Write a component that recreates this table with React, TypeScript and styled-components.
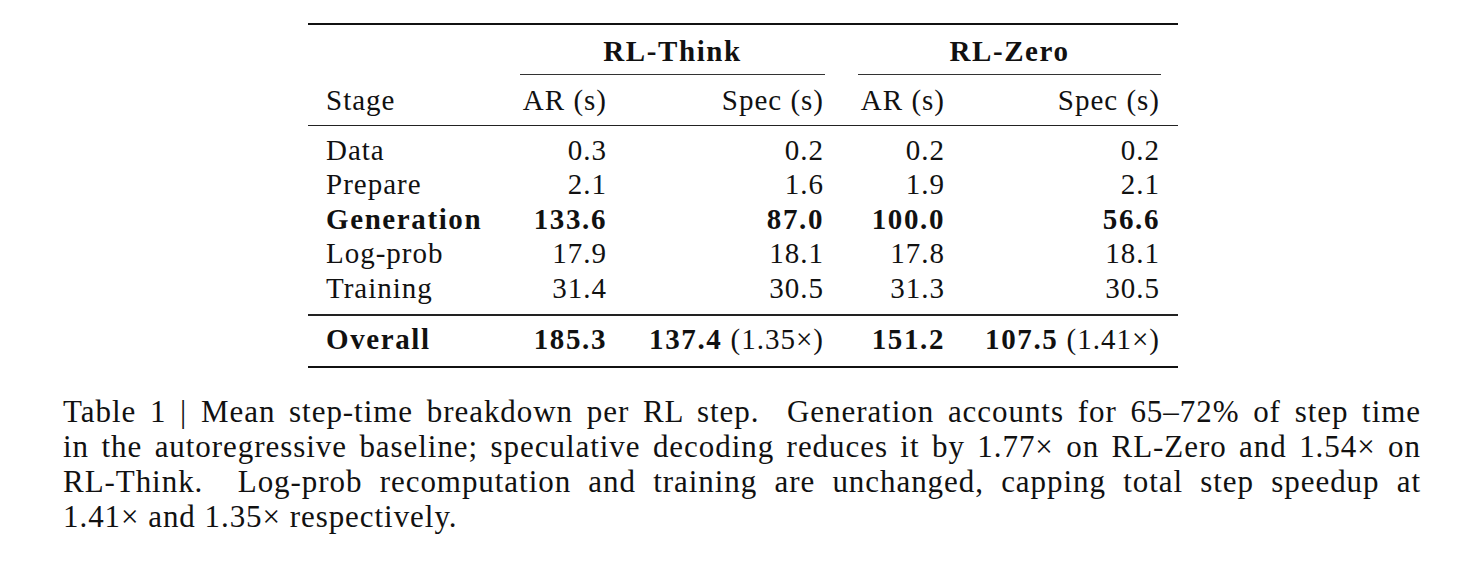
import * as React from 'react'
import styled, { createGlobalStyle } from 'styled-components'

const GlobalStyle = createGlobalStyle`
    html, body {
        margin: 0;
        padding: 0;
        background: #ffffff;
    }
    body {
        font-family: 'Liberation Serif', 'Times New Roman', serif;
        color: #111111;
    }
`

interface Row {
    stage: string
    thinkAr: string
    thinkSpec: string
    zeroAr: string
    zeroSpec: string
    bold?: boolean
}

const rows: Row[] = [
    { stage: 'Data', thinkAr: '0.3', thinkSpec: '0.2', zeroAr: '0.2', zeroSpec: '0.2' },
    { stage: 'Prepare', thinkAr: '2.1', thinkSpec: '1.6', zeroAr: '1.9', zeroSpec: '2.1' },
    { stage: 'Generation', thinkAr: '133.6', thinkSpec: '87.0', zeroAr: '100.0', zeroSpec: '56.6', bold: true },
    { stage: 'Log-prob', thinkAr: '17.9', thinkSpec: '18.1', zeroAr: '17.8', zeroSpec: '18.1' },
    { stage: 'Training', thinkAr: '31.4', thinkSpec: '30.5', zeroAr: '31.3', zeroSpec: '30.5' },
]

const captionLines = [
    'Table 1 | Mean step-time breakdown per RL step.  Generation accounts for 65–72% of step time',
    'in the autoregressive baseline; speculative decoding reduces it by 1.77× on RL-Zero and 1.54× on',
    'RL-Think.  Log-prob recomputation and training are unchanged, capping total step speedup at',
    '1.41× and 1.35× respectively.',
]

const App = () => (
    <Page>
        <GlobalStyle />
        <TableWrap>
            <Table>
                <TopRule />
                <GroupRow>
                    <span />
                    <GroupCell>
                        <GroupTitle>RL-Think</GroupTitle>
                        <CmidRule />
                    </GroupCell>
                    <GroupCell>
                        <GroupTitle>RL-Zero</GroupTitle>
                        <CmidRule />
                    </GroupCell>
                </GroupRow>
                <HeadRow>
                    <Cell>Stage</Cell>
                    <Cell align="right">AR (s)</Cell>
                    <Cell align="right">Spec (s)</Cell>
                    <Cell align="right">AR (s)</Cell>
                    <Cell align="right">Spec (s)</Cell>
                </HeadRow>
                <MidRule />
                <Body>
                    {rows.map(r => (
                        <DataRow key={r.stage} bold={r.bold}>
                            <Cell>{r.stage}</Cell>
                            <Cell align="right">{r.thinkAr}</Cell>
                            <Cell align="right">{r.thinkSpec}</Cell>
                            <Cell align="right">{r.zeroAr}</Cell>
                            <Cell align="right">{r.zeroSpec}</Cell>
                        </DataRow>
                    ))}
                </Body>
                <MidRule />
                <TotalRow>
                    <Cell><Strong>Overall</Strong></Cell>
                    <Cell align="right"><Strong>185.3</Strong></Cell>
                    <Cell align="right"><Strong>137.4</Strong> (1.35×)</Cell>
                    <Cell align="right"><Strong>151.2</Strong></Cell>
                    <Cell align="right"><Strong>107.5</Strong> (1.41×)</Cell>
                </TotalRow>
                <BottomRule />
            </Table>
        </TableWrap>
        <Caption>
            {captionLines.map((line, i) => (
                <CaptionLine key={i} last={i === captionLines.length - 1}>
                    {line}
                </CaptionLine>
            ))}
        </Caption>
    </Page>
)

export default App

const Page = styled.div`
    width: 1476px;
    height: 570px;
    padding-top: 23px;
    box-sizing: border-box;
`

const TableWrap = styled.div`
    display: flex;
    justify-content: flex-start;
    padding-left: 308px;
    font-size: 29px;
    letter-spacing: 1px;
`

const Table = styled.div`
    width: 870px;
    display: flex;
    flex-direction: column;
`

const columns = `160px 86px 182px 86px 180px`

const Strong = styled.b`
    font-weight: bold;
    letter-spacing: 1.6px;
`

const TopRule = styled.div`
    height: 2px;
    background: #111;
`
const BottomRule = styled(TopRule)``

const MidRule = styled.div`
    height: 1.3px;
    background: #222;
`

const GroupRow = styled.div`
    display: grid;
    grid-template-columns: 160px 303px 301px;
    column-gap: 35px;
    padding: 0 18px;
    height: 50px;
`

const GroupCell = styled.div`
    display: flex;
    flex-direction: column;
    justify-content: flex-end;
    align-items: stretch;
`

const GroupTitle = styled.div`
    text-align: center;
    font-weight: bold;
    letter-spacing: 1.6px;
    line-height: 34px;
    padding-bottom: 6px;
`

const CmidRule = styled.div`
    height: 1px;
    background: #333;
    margin: 0 -1px 0 -1px;
`

const Grid = styled.div`
    display: grid;
    grid-template-columns: ${columns};
    column-gap: 35px;
    padding: 0 18px;
`

const HeadRow = styled(Grid)`
    height: 50px;
    align-items: center;
    padding-bottom: 1px;
    box-sizing: border-box;
`

const Body = styled.div`
    display: flex;
    flex-direction: column;
    padding: 6px 0 9px;
`

const DataRow = styled(Grid)<{ bold?: boolean }>`
    height: 34.6px;
    align-items: center;
    font-weight: ${p => (p.bold ? 'bold' : 'normal')};
    letter-spacing: ${p => (p.bold ? '1.6px' : '1px')};
`

const TotalRow = styled(Grid)`
    height: 50px;
    align-items: center;
    padding-bottom: 3px;
    box-sizing: border-box;
`

const Cell = styled.div<{ align?: 'left' | 'right' }>`
    text-align: ${p => p.align ?? 'left'};
    white-space: nowrap;
    line-height: 34px;
`

const Caption = styled.div`
    width: 1358px;
    margin: 26px 0 0 63px;
    font-size: 31px;
    letter-spacing: 0.95px;
`

const CaptionLine = styled.div<{ last?: boolean }>`
    line-height: 35px;
    white-space: pre;
    text-align: ${p => (p.last ? 'left' : 'justify')};
    text-align-last: ${p => (p.last ? 'left' : 'justify')};
`
